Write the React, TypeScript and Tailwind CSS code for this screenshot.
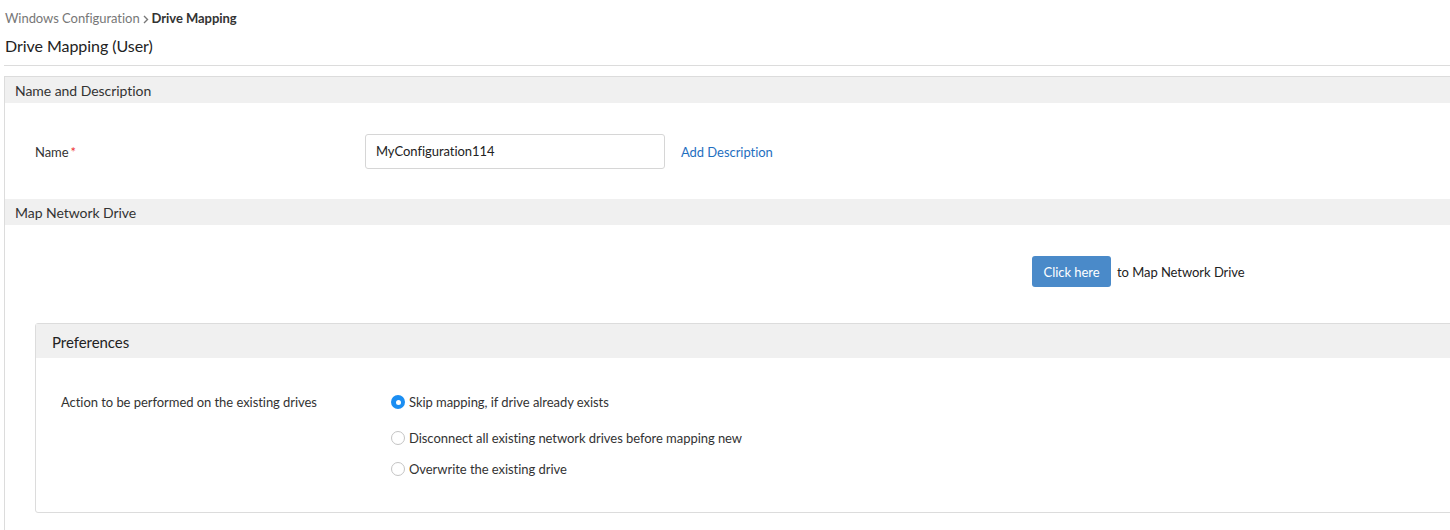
import * as React from "react";

const Radio = ({ checked, label }: { checked?: boolean; label: string }) => (
  <label className="flex items-center gap-[4px] h-[20px]">
    {checked ? (
      <span className="w-[14px] h-[14px] rounded-full bg-[#1b8ef2] flex items-center justify-center">
        <span className="w-[5px] h-[5px] rounded-full bg-white" />
      </span>
    ) : (
      <span className="w-[14px] h-[14px] rounded-full border border-[#c4c4c4] bg-white" />
    )}
    <span className="pt-[2px]">{label}</span>
  </label>
);

const SectionHeader = ({ title }: { title: string }) => (
  <div className="h-[26px] bg-[#f0f0f0] pl-[10px] pt-[1px] flex items-center text-[14px] text-[#333]">{title}</div>
);

export default function App() {
  return (
    <div className="w-[1450px] h-[530px] overflow-hidden bg-white text-[#333] font-['Lato','Noto_Sans',sans-serif] text-[13px] tracking-[-0.05px]">
      <div className="pl-[5px] pt-[11px]">
        <div className="flex items-center h-[16px] text-[13px]">
          <span className="text-[#777]">Windows Configuration</span>
          <span className="text-[#777] mx-[3px]">
            <svg width="6" height="9" viewBox="0 0 6 9" fill="none">
              <path d="M1 1l3.5 3.5L1 8" stroke="#777" strokeWidth="1.4" />
            </svg>
          </span>
          <span className="font-bold text-[#333]">Drive Mapping</span>
        </div>
        <div className="mt-[9px] h-[20px] flex items-center text-[16px] text-[#222]">Drive Mapping (User)</div>
      </div>
      <div className="ml-[4px] mt-[9px] border-t border-[#dcdcdc]" />

      <div className="ml-[4px] mt-[10px] w-[1470px] border-l border-t border-[#dcdcdc] pb-[40px]">
        <SectionHeader title="Name and Description" />
        <div className="flex items-center pt-[31px] pb-[30px]">
          <div className="w-[360px] pl-[30px] pt-[2px]">
            Name<span className="text-[#e33] ml-[2px]">*</span>
          </div>
          <div className="w-[300px] h-[35px] border border-[#d6d6d6] rounded-[3px] flex items-center pl-[10px] pt-[1px] text-[13px] text-[#222]">
            MyConfiguration114
          </div>
          <a className="ml-[16px] pt-[2px] text-[#1f6fbf] cursor-pointer">Add Description</a>
        </div>

        <SectionHeader title="Map Network Drive" />
        <div className="flex items-center pt-[31px] pl-[1027px]">
          <button className="h-[31px] w-[79px] pt-[2px] bg-[#4a8ac9] text-white rounded-[3px] text-[13px]">Click here</button>
          <span className="ml-[6px] pt-[2px] text-[#222]">to Map Network Drive</span>
        </div>

        <div className="ml-[30px] mt-[36px] border border-[#dcdcdc] rounded-[3px]">
          <div className="h-[34px] bg-[#f0f0f0] pl-[16px] pt-[2px] flex items-center text-[15px] text-[#222]">Preferences</div>
          <div className="flex pt-[34px] pb-[33px]">
            <div className="w-[355px] pl-[25px] h-[20px] pt-[2px] flex items-center">Action to be performed on the existing drives</div>
            <div className="flex flex-col">
              <Radio checked label="Skip mapping, if drive already exists" />
              <div className="mt-[16px]">
                <Radio label="Disconnect all existing network drives before mapping new" />
              </div>
              <div className="mt-[11px]">
                <Radio label="Overwrite the existing drive" />
              </div>
            </div>
          </div>
        </div>
      </div>
    </div>
  );
}
